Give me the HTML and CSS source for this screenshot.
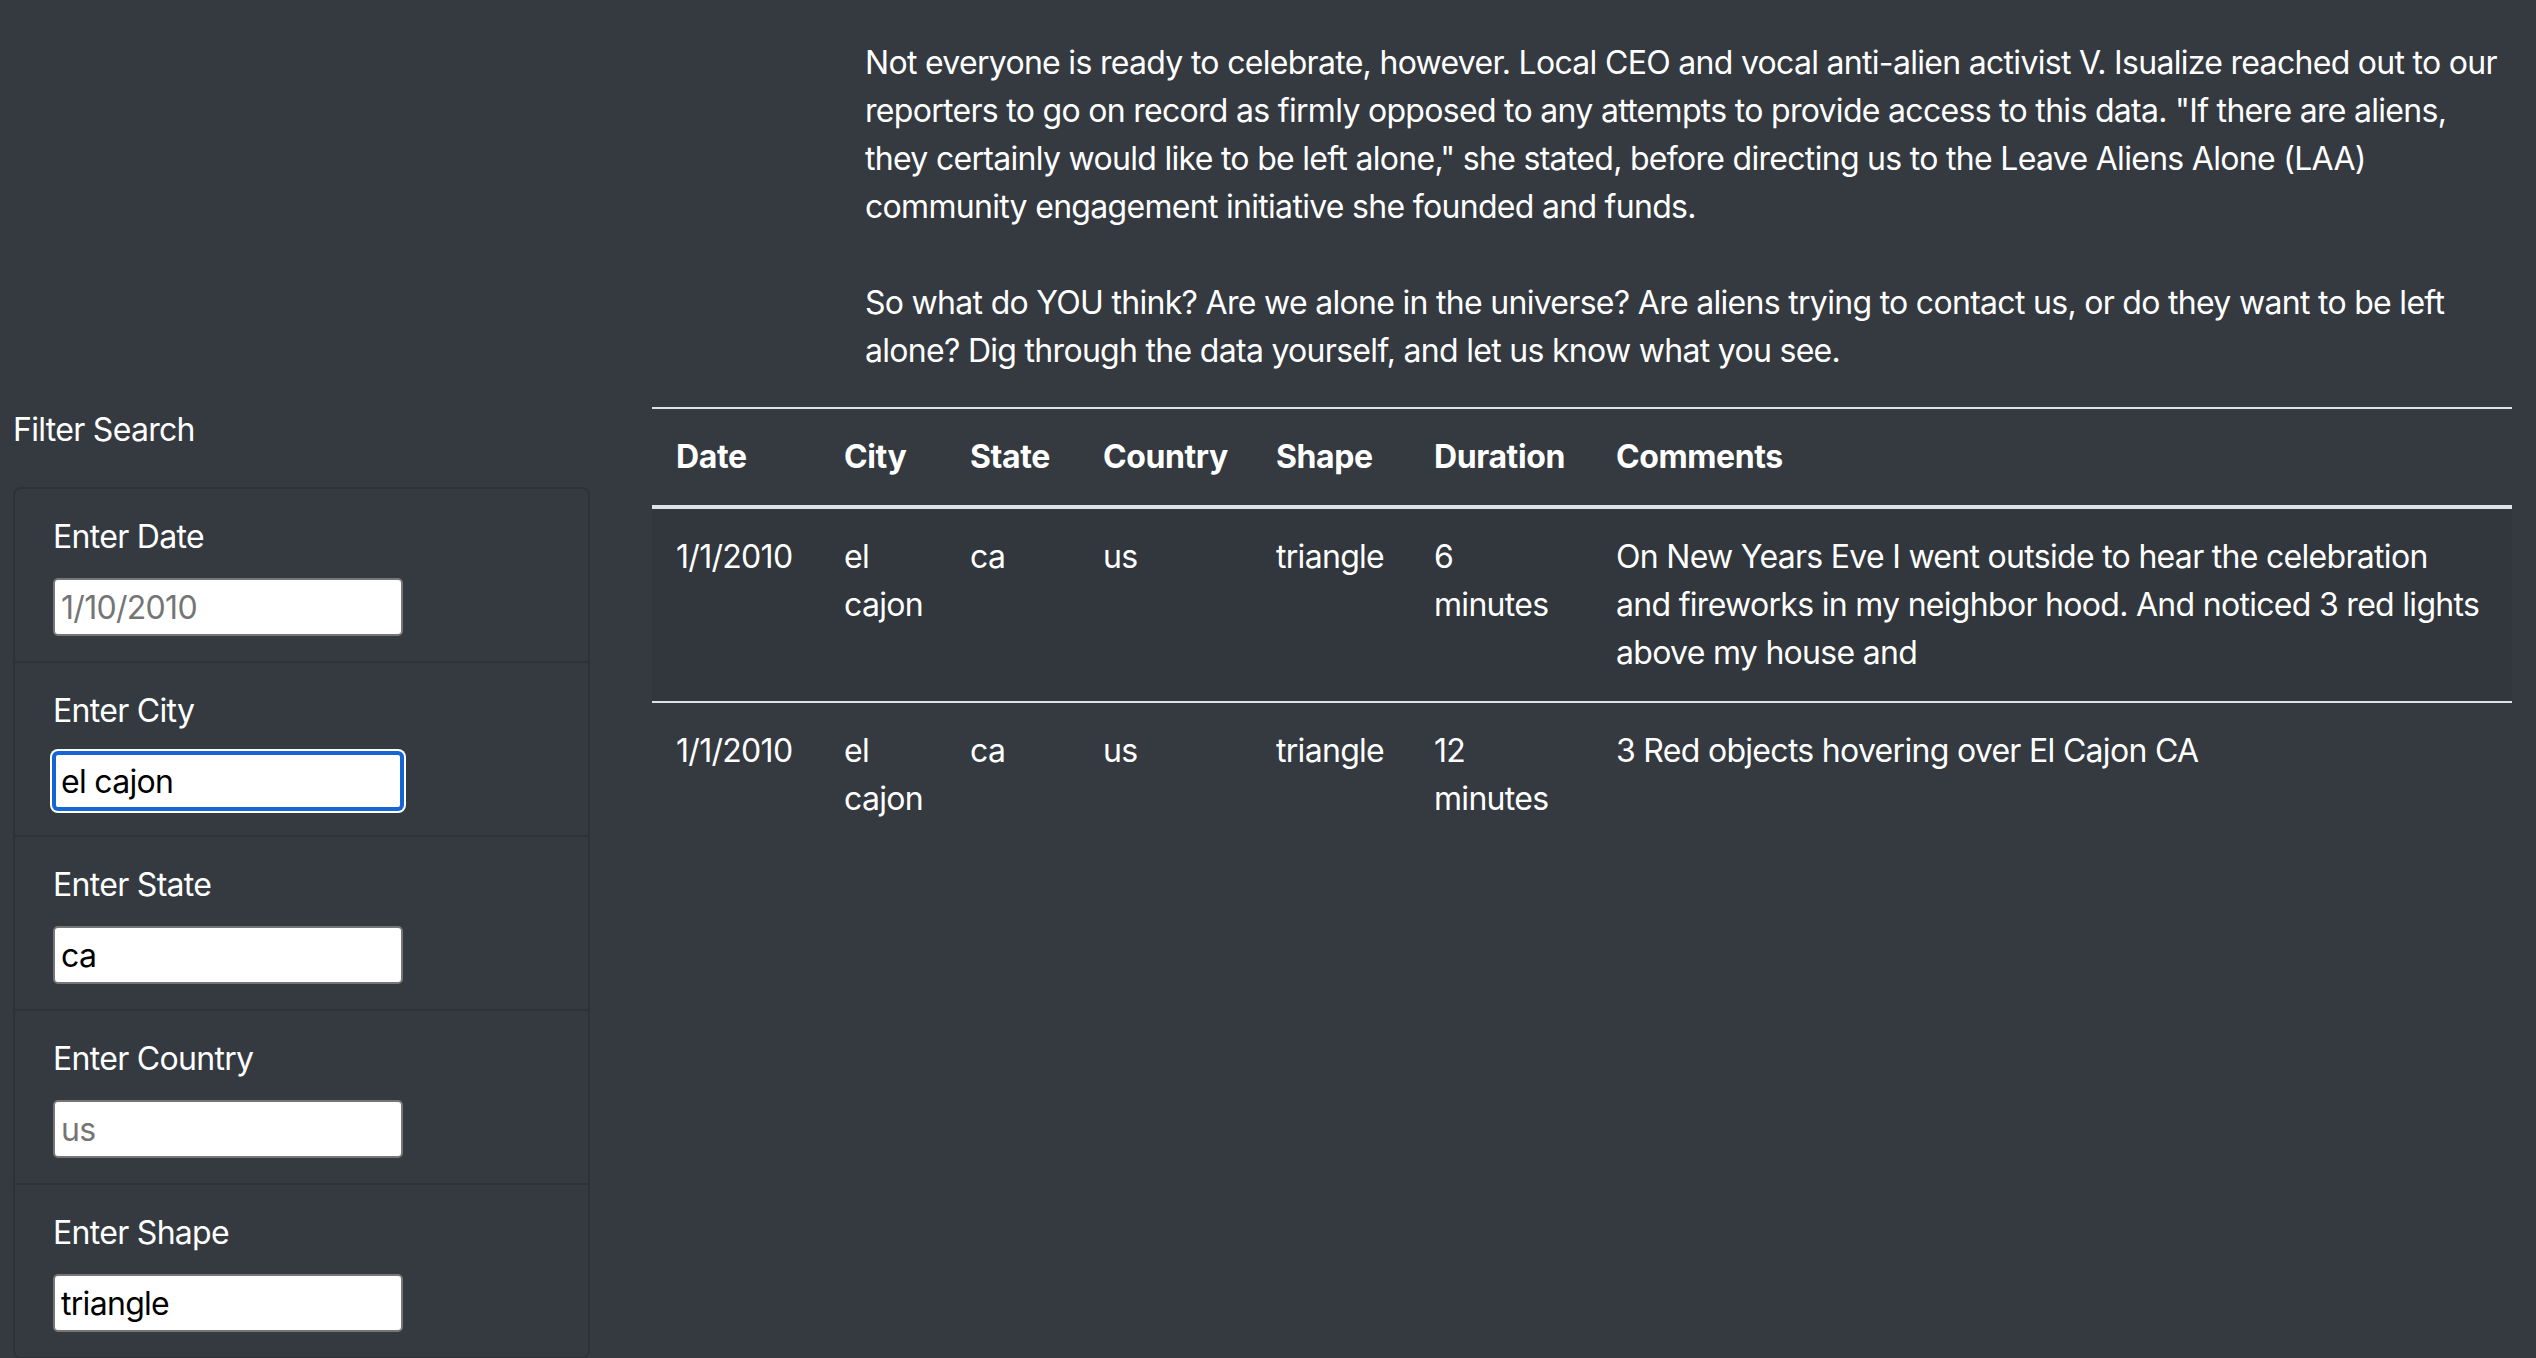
FILE: index.html
```html
<!DOCTYPE html>
<html lang="en">
<head>
<meta charset="utf-8">
<title>UFO Sightings</title>
<link rel="stylesheet" href="styles.css">
</head>
<body>
<div class="intro-row">
  <div class="intro">
    <p>Not everyone is ready to celebrate, however. Local CEO and vocal anti-alien activist V. Isualize reached out to our reporters to go on record as firmly opposed to any attempts to provide access to this data. "If there are aliens, they certainly would like to be left alone," she stated, before directing us to the Leave Aliens Alone (LAA) community engagement initiative she founded and funds.</p>
    <p>So what do YOU think? Are we alone in the universe? Are aliens trying to contact us, or do they want to be left alone? Dig through the data yourself, and let us know what you see.</p>
  </div>
</div>
<div class="main-row">
  <aside class="sidebar">
    <div class="filter-title">Filter Search</div>
    <form class="card">
      <div class="item">
        <label class="label" for="datetime">Enter Date</label>
        <input class="field" id="datetime" type="text" placeholder="1/10/2010">
      </div>
      <div class="item">
        <label class="label" for="city">Enter City</label>
        <input class="field field-focus" id="city" type="text" value="el cajon">
      </div>
      <div class="item">
        <label class="label" for="state">Enter State</label>
        <input class="field" id="state" type="text" value="ca">
      </div>
      <div class="item">
        <label class="label" for="country">Enter Country</label>
        <input class="field" id="country" type="text" placeholder="us">
      </div>
      <div class="item">
        <label class="label" for="shape">Enter Shape</label>
        <input class="field" id="shape" type="text" value="triangle">
      </div>
    </form>
  </aside>
  <main class="content">
    <table class="table">
      <colgroup>
        <col class="c-date">
        <col class="c-city">
        <col class="c-state">
        <col class="c-country">
        <col class="c-shape">
        <col class="c-duration">
        <col class="c-comments">
      </colgroup>
      <thead>
        <tr>
          <th>Date</th>
          <th>City</th>
          <th>State</th>
          <th>Country</th>
          <th>Shape</th>
          <th>Duration</th>
          <th>Comments</th>
        </tr>
      </thead>
      <tbody>
        <tr class="odd">
          <td>1/1/2010</td>
          <td>el cajon</td>
          <td>ca</td>
          <td>us</td>
          <td>triangle</td>
          <td>6 minutes</td>
          <td>On New Years Eve I went outside to hear the celebration and fireworks in my neighbor hood. And noticed 3 red lights above my house and</td>
        </tr>
        <tr>
          <td>1/1/2010</td>
          <td>el cajon</td>
          <td>ca</td>
          <td>us</td>
          <td>triangle</td>
          <td>12 minutes</td>
          <td>3 Red objects hovering over El Cajon CA</td>
        </tr>
      </tbody>
    </table>
  </main>
</div>
</body>
</html>
```
FILE: styles.css
```css
html, body {
  margin: 0;
  padding: 0;
}
body {
  background: #343a40;
  color: #fff;
  font-family: Inter, "Noto Sans", sans-serif;
  font-size: 32px;
  line-height: 48px;
  letter-spacing: -0.7px;
  overflow: hidden;
  height: 1358px;
}
.intro-row {
  padding: 39px 24px 0 865px;
}
.intro p {
  margin: 0 0 48px;
}
.intro p:last-child {
  margin-bottom: 32px;
}
.main-row {
  display: flex;
  align-items: flex-start;
}
.sidebar {
  width: 577px;
  margin-left: 13px;
  flex: none;
}
.filter-title {
  margin-top: -1px;
  margin-bottom: 33px;
}
.card {
  display: flex;
  flex-direction: column;
  border: 2px solid rgba(0, 0, 0, 0.125);
  border-radius: 8px;
  margin: 0;
}
.item {
  padding: 24px 38px 25px;
  border-bottom: 2px solid rgba(0, 0, 0, 0.125);
  display: flex;
  flex-direction: column;
  align-items: flex-start;
}
.item:last-child {
  border-bottom: 0;
}
.label {
  margin-bottom: 17px;
}
.field {
  box-sizing: border-box;
  width: 350px;
  height: 58px;
  border: 2px solid #767676;
  border-radius: 5px;
  background: #fff;
  color: #000;
  font-family: inherit;
  font-size: 32px;
  letter-spacing: -0.7px;
  padding: 0 6px;
  margin: 0;
  outline: none;
}
.field::placeholder {
  color: #757575;
}
.field-focus {
  border: 3px solid #1565d4;
  padding: 0 5px;
  box-shadow: 0 0 0 1px #1565d4, 0 0 0 3px #fff;
}
.content {
  flex: 1;
  margin-left: 62px;
  margin-right: 24px;
}
.table {
  width: 100%;
  table-layout: fixed;
  border-collapse: collapse;
}
.c-date { width: 168px; }
.c-city { width: 126px; }
.c-state { width: 133px; }
.c-country { width: 173px; }
.c-shape { width: 158px; }
.c-duration { width: 182px; }
.table th,
.table td {
  padding: 24px;
  text-align: left;
  vertical-align: top;
  border-top: 2px solid #dee2e6;
}
.table th {
  font-weight: 700;
  letter-spacing: -0.4px;
  vertical-align: bottom;
  border-bottom: 4px solid #dee2e6;
}
.table tr.odd td {
  background: rgba(0, 0, 0, 0.05);
}
```
